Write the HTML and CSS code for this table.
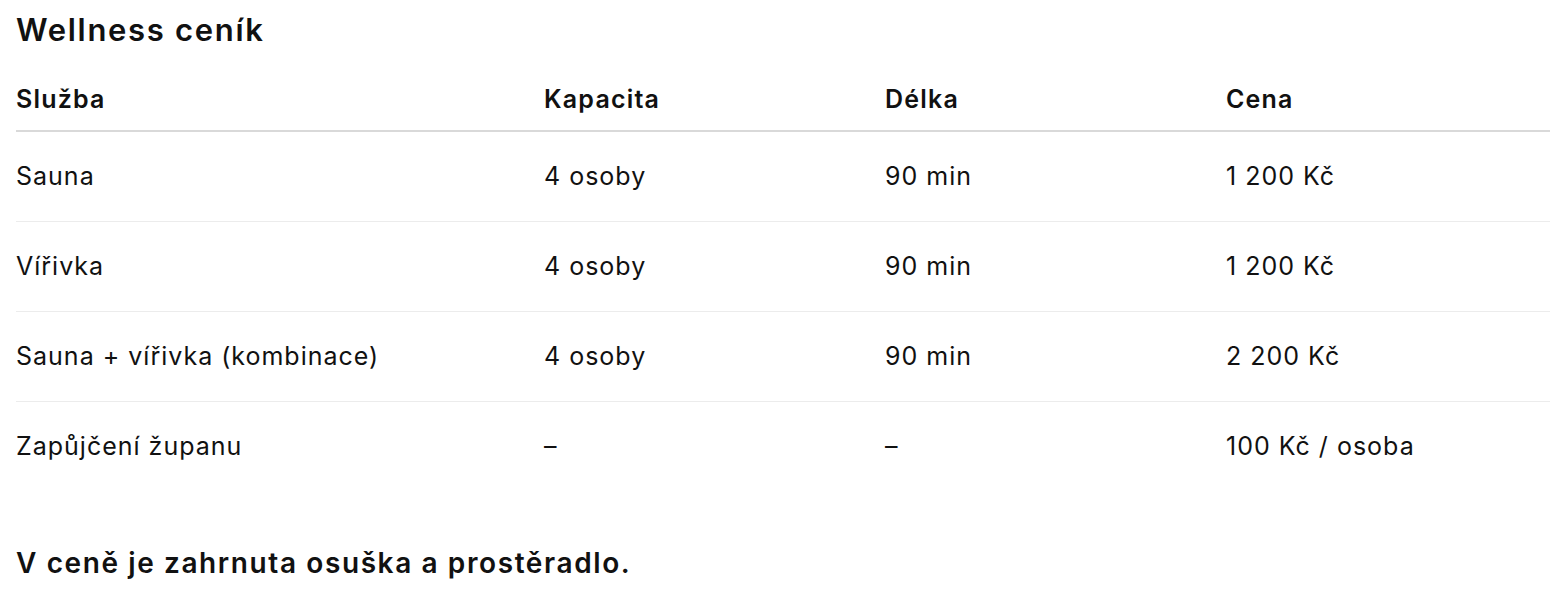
FILE: index.html
```html
<!DOCTYPE html>
<html lang="cs">
<head>
<meta charset="utf-8">
<title>Wellness ceník</title>
<link rel="stylesheet" href="styles.css">
</head>
<body>
<main class="page">
  <h1 class="title">Wellness ceník</h1>
  <div class="table">
    <div class="row head">
      <div class="cell">Služba</div>
      <div class="cell">Kapacita</div>
      <div class="cell">Délka</div>
      <div class="cell">Cena</div>
    </div>
    <div class="row">
      <div class="cell">Sauna</div>
      <div class="cell">4 osoby</div>
      <div class="cell">90 min</div>
      <div class="cell">1 200 Kč</div>
    </div>
    <div class="row">
      <div class="cell">Vířivka</div>
      <div class="cell">4 osoby</div>
      <div class="cell">90 min</div>
      <div class="cell">1 200 Kč</div>
    </div>
    <div class="row">
      <div class="cell">Sauna + vířivka (kombinace)</div>
      <div class="cell">4 osoby</div>
      <div class="cell">90 min</div>
      <div class="cell">2 200 Kč</div>
    </div>
    <div class="row last">
      <div class="cell">Zapůjčení županu</div>
      <div class="cell">–</div>
      <div class="cell">–</div>
      <div class="cell">100 Kč / osoba</div>
    </div>
  </div>
  <p class="note">V ceně je zahrnuta osuška a prostěradlo.</p>
</main>
</body>
</html>
```
FILE: styles.css
```css
* { box-sizing: border-box; }
html, body { margin: 0; background: #fff; }
body {
  font-family: Inter, "Noto Sans", "Liberation Sans", sans-serif;
  color: #111;
}
.page {
  padding: 12px 4px 0 16px;
}
.title {
  margin: 0;
  font-size: 31px;
  line-height: 36px;
  font-weight: 600;
  letter-spacing: 1.7px;
}
.table {
  margin-top: 20px;
  width: 1534px;
}
.row {
  display: grid;
  grid-template-columns: 528px 341px 341px 1fr;
  border-bottom: 1px solid #ececec;
}
.row.head {
  border-bottom: 2px solid #d9d9d9;
}
.row.last {
  border-bottom: none;
}
.cell {
  font-size: 25px;
  line-height: 30px;
  letter-spacing: 1px;
  padding: 29px 0 30px;
}
.head .cell {
  font-weight: 600;
  letter-spacing: 1.2px;
  padding: 16px 0 16px;
}
.note {
  margin: 56px 0 0;
  font-size: 28px;
  line-height: 32px;
  font-weight: 600;
  letter-spacing: 1.6px;
}
```
